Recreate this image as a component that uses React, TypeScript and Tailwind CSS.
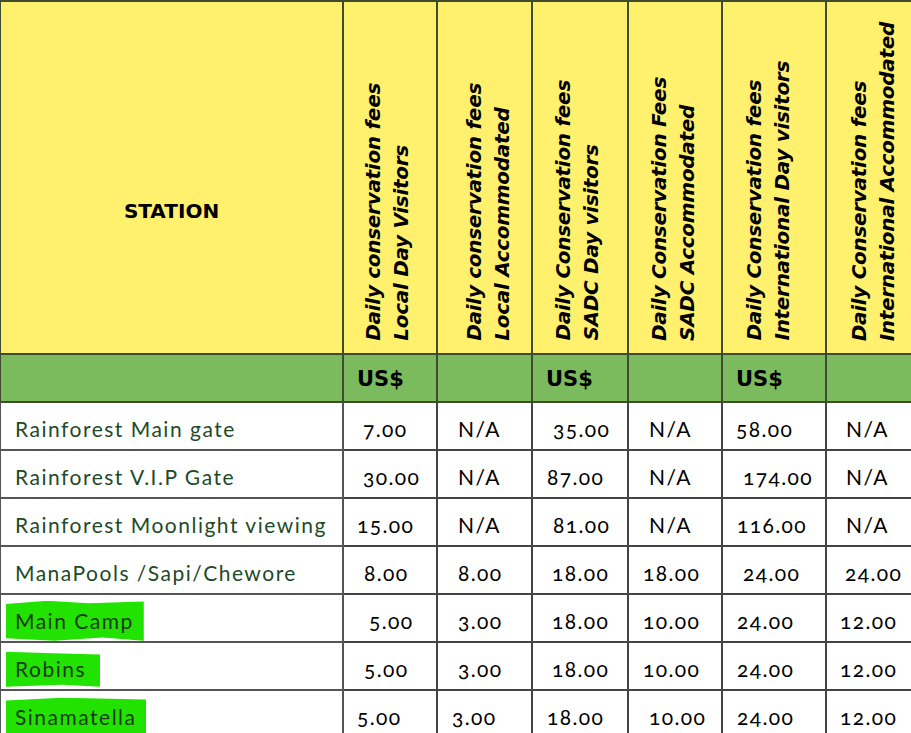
import React from 'react'

type Cell = { v: string; pl: number }

const headers: [string, string, number][] = [
  ['Daily conservation fees', 'Local Day Visitors', 15],
  ['Daily conservation fees', 'Local Accommodated', 22],
  ['Daily Conservation fees', 'SADC Day visitors', 16],
  ['Daily Conservation Fees', 'SADC Accommodated', 16],
  ['Daily Conservation fees', 'International Day visitors', 17],
  ['Daily Conservation fees', 'International Accommodated', 18],
]

const rows: { name: string; mark?: string; cells: Cell[] }[] = [
  {
    name: 'Rainforest Main gate',
    cells: [
      { v: '7.00', pl: 19 },
      { v: 'N/A', pl: 20 },
      { v: '35.00', pl: 20 },
      { v: 'N/A', pl: 20 },
      { v: '58.00', pl: 13 },
      { v: 'N/A', pl: 19 },
    ],
  },
  {
    name: 'Rainforest V.I.P Gate',
    cells: [
      { v: '30.00', pl: 19 },
      { v: 'N/A', pl: 20 },
      { v: '87.00', pl: 14 },
      { v: 'N/A', pl: 20 },
      { v: '174.00', pl: 20 },
      { v: 'N/A', pl: 19 },
    ],
  },
  {
    name: 'Rainforest Moonlight viewing',
    cells: [
      { v: '15.00', pl: 13 },
      { v: 'N/A', pl: 20 },
      { v: '81.00', pl: 20 },
      { v: 'N/A', pl: 20 },
      { v: '116.00', pl: 14 },
      { v: 'N/A', pl: 19 },
    ],
  },
  {
    name: 'ManaPools /Sapi/Chewore',
    cells: [
      { v: '8.00', pl: 20 },
      { v: '8.00', pl: 20 },
      { v: '18.00', pl: 19 },
      { v: '18.00', pl: 14 },
      { v: '24.00', pl: 20 },
      { v: '24.00', pl: 18 },
    ],
  },
  {
    name: 'Main Camp',
    mark: 'pr-[10px] pt-[7px] pb-[8px] [clip-path:polygon(0_8%,30%_0,60%_6%,100%_2%,100%_100%,70%_92%,35%_100%,0_94%)]',
    cells: [
      { v: '5.00', pl: 25 },
      { v: '3.00', pl: 20 },
      { v: '18.00', pl: 19 },
      { v: '10.00', pl: 14 },
      { v: '24.00', pl: 14 },
      { v: '12.00', pl: 13 },
    ],
  },
  {
    name: 'Robins',
    mark: 'pr-[14px] pt-[4px] pb-[6px] [clip-path:polygon(0_0,50%_4%,100%_8%,100%_100%,60%_94%,0_100%)]',
    cells: [
      { v: '5.00', pl: 20 },
      { v: '3.00', pl: 20 },
      { v: '18.00', pl: 19 },
      { v: '10.00', pl: 14 },
      { v: '24.00', pl: 14 },
      { v: '12.00', pl: 13 },
    ],
  },
  {
    name: 'Sinamatella',
    mark: 'pr-[10px] pt-[6px] pb-[14px] [clip-path:polygon(0_6%,40%_0,100%_4%,100%_100%,0_100%)]',
    cells: [
      { v: '5.00', pl: 13 },
      { v: '3.00', pl: 14 },
      { v: '18.00', pl: 14 },
      { v: '10.00', pl: 20 },
      { v: '24.00', pl: 14 },
      { v: '12.00', pl: 13 },
    ],
  },
]

const colWidths = [343, 94, 95, 96, 94, 104, 96]

export default function App() {
  return (
    <div className="w-[911px] h-[733px] overflow-hidden bg-white font-['Lato',sans-serif]">
      <table className="table-fixed border-collapse w-[922px] -ml-px">
        <colgroup>
          {colWidths.map((w, i) => (
            <col key={i} style={{ width: w }} />
          ))}
        </colgroup>
        <thead>
          {/* ── yellow title row ── */}
          <tr className="h-[353px] bg-[#fff16d]">
            <th className="border-2 border-[#3f4a2e] align-top p-0">
              <div className="pt-[199px] text-center font-['DejaVu_Sans',sans-serif] text-[20px] font-bold text-black leading-none">
                STATION
              </div>
            </th>
            {headers.map(([a, b, pl], i) => (
              <th key={i} className="border-2 border-[#3f4a2e] align-bottom p-0">
                <div className="flex items-end h-[349px] pb-[12px]" style={{ paddingLeft: pl }}>
                  <div className="[writing-mode:vertical-rl] rotate-180 text-left font-['DejaVu_Sans',sans-serif] text-[20px] leading-[28px] font-bold italic text-black whitespace-nowrap tracking-[-0.3px]">
                    <div>{a}</div>
                    <div>{b}</div>
                  </div>
                </div>
              </th>
            ))}
          </tr>
          {/* ── green currency row ── */}
          <tr className="h-[48px] bg-[#7bbb5d]">
            <th className="border-2 border-[#3f4a2e]" />
            {[0, 1, 2, 3, 4, 5].map((i) => (
              <th
                key={i}
                className="border-2 border-[#3f4a2e] text-left align-middle pl-[13px] pt-[4px] font-['DejaVu_Sans',sans-serif] text-[21px] font-bold text-black"
              >
                {i % 2 === 0 ? 'US$' : ''}
              </th>
            ))}
          </tr>
        </thead>
        <tbody>
          {rows.map((r) => (
            <tr key={r.name} className="h-[48px]">
              <td className="border-2 border-[#555] pl-[14px] pt-[5px] text-[21px] text-[#1d4a27] whitespace-nowrap tracking-[1.5px]">
                {r.mark ? (
                  <span className={`-ml-[9px] pl-[9px] bg-[#22e300] text-[#1a3a1c] ${r.mark}`}>
                    {r.name}
                  </span>
                ) : (
                  r.name
                )}
              </td>
              {r.cells.map((c, i) => (
                <td
                  key={i}
                  className="border-2 border-[#444] pt-[5px] text-[21px] text-black oldstyle-nums tracking-[1.4px] whitespace-nowrap"
                  style={{ paddingLeft: c.pl }}
                >
                  {c.v}
                </td>
              ))}
              <td className="border-2 border-[#444]" />
            </tr>
          ))}
        </tbody>
      </table>
    </div>
  )
}
